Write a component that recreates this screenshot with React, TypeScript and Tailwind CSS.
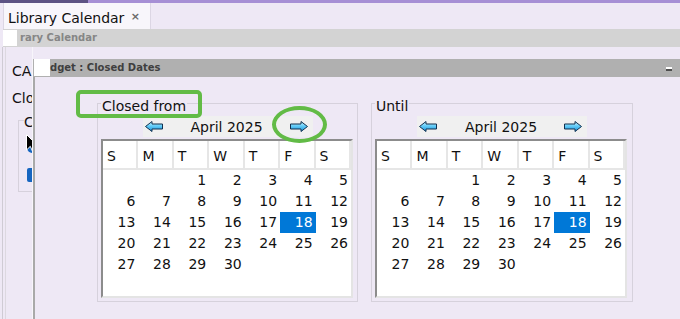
import React from 'react'

const heads = ['S', 'M', 'T', 'W', 'T', 'F', 'S']

function Arrow({ dir, id, className }: { dir: 'left' | 'right'; id: string; className?: string }) {
  const d =
    dir === 'left'
      ? 'M0.5 5.5 L7 0.5 V3 H17.5 V8 H7 V10.5 Z'
      : 'M17.5 5.5 L11 0.5 V3 H0.5 V8 H11 V10.5 Z'
  return (
    <svg width="18" height="11" viewBox="0 0 18 11" className={className}>
      <defs>
        <linearGradient id={id} x1="0" y1="0" x2="0" y2="1">
          <stop offset="0" stopColor="#d2f3ff" />
          <stop offset="0.45" stopColor="#62cdf8" />
          <stop offset="1" stopColor="#1e8ed8" />
        </linearGradient>
      </defs>
      <path d={d} fill={`url(#${id})`} stroke="#11304f" strokeWidth="1" />
    </svg>
  )
}

function Calendar({ label, id, className }: { label: string; id: string; className: string }) {
  const cells: (number | null)[] = [null, null, ...Array.from({ length: 30 }, (_, i) => i + 1)]
  while (cells.length < 42) cells.push(null)

  return (
    <fieldset className={`border border-[#d6d1dc] px-[3px] pb-[3px] ${className}`}>
      <legend className="px-px pt-[5px] leading-[16px]">{label}</legend>
      <div className="mx-auto mt-[2px] flex h-[21px] w-[170px] items-center bg-[#f0f0f0] pl-[2px]">
        <Arrow dir="left" id={`${id}-l`} />
        <span className="ml-[28px] leading-[16px]">April 2025</span>
        <Arrow dir="right" id={`${id}-r`} className="ml-[27px]" />
      </div>
      <div className="mt-[2px] w-[252px] border-2 border-t-[#8c8c8c] border-l-[#8c8c8c] border-r-[#e4e4e4] border-b-[#e4e4e4] bg-white">
        <div className="grid grid-cols-7">
          {heads.map((h, i) => (
            <div key={i} className="h-[29px] border-r-2 border-b-2 border-[#e6e6e6] pl-[4px] pt-[7px] leading-[16px]">
              {h}
            </div>
          ))}
        </div>
        <div className="grid grid-cols-7">
          {cells.map((d, i) => (
            <div
              key={i}
              className={
                d === 18
                  ? 'h-[21px] bg-[#0078d7] pr-[3px] text-right leading-[21px] text-white'
                  : 'h-[21px] pr-[3px] text-right leading-[21px]'
              }
            >
              {d ?? ''}
            </div>
          ))}
        </div>
      </div>
    </fieldset>
  )
}

export default function App() {
  return (
    <div className="relative flex h-[319px] w-[680px] flex-col overflow-hidden bg-[#eee8f5] font-['DejaVu_Sans',sans-serif] text-[14px] text-[#111]">
      {/* top strip */}
      <div className="flex h-[3px] shrink-0">
        <div className="w-[88px] bg-[#5d5384]" />
        <div className="flex-1 bg-[#a68fd5]" />
      </div>

      {/* tab */}
      <div className="flex h-[26px] shrink-0">
        <div className="ml-[3px] flex w-[148px] items-start border-x border-[#dcd6e4] bg-[#f8f6fb] pl-[4px] pt-[7px]">
          <span className="leading-[16px]">Library Calendar</span>
          <span className="ml-auto mr-[10px] mt-[-1px] text-[11px] font-bold leading-[16px] text-[#6a6a6a]">×</span>
        </div>
      </div>

      {/* panel header */}
      <div className="ml-[3px] flex h-[18px] shrink-0 items-center bg-[#d3d3d3]">
        <div className="h-[16px] w-[14px] bg-white" />
        <span className="ml-[3px] text-[10px] font-bold leading-[12px] text-[#868686]">rary Calendar</span>
      </div>

      <div className="flex flex-1">
        <div className="ml-[2px] w-px bg-[#cfcbd4]" />
        <div className="ml-[2px] w-px bg-[#dcd8e0]" />

        {/* underlying panel, mostly covered */}
        <div className="relative w-[27px] overflow-hidden border-r border-[#f7f5fa]">
          <div className="whitespace-nowrap pl-[6px] pt-[16px] leading-[16px]">CA</div>
          <div className="mt-[11px] whitespace-nowrap pl-[6px] leading-[16px]">Clo</div>
          <fieldset className="ml-[12px] mt-[4px] w-[40px] border border-[#d6d1dc] pb-[9px]">
            <legend className="ml-[5px] pt-[4px] leading-[16px]">C</legend>
            <div className="ml-[8px] mt-[12px] h-[11px] w-[11px] rounded-full bg-[#1565c0]" />
            <div className="ml-[8px] mt-[15px] h-[14px] w-[13px] rounded-[2px] bg-[#1565c0]" />
          </fieldset>
          <svg width="12" height="19" viewBox="0 0 12 19" className="absolute left-[20px] top-[87px]">
            <path d="M0.5 0.5 V16 L4.3 12.3 L6.8 18 L9.2 17 L6.8 11.5 H11.5 Z" fill="#000" stroke="#fff" strokeWidth="1" />
          </svg>
        </div>

        {/* window */}
        <div className="mt-[12px] flex flex-1 flex-col">
          <div className="flex h-[18px] items-center bg-[#b0b0b0]">
            <div className="ml-px h-[17px] w-[16px] self-start bg-white" />
            <span className="text-[10px] font-bold leading-[12px] text-[#3f3f3f]">dget : Closed Dates</span>
            <div className="ml-auto mr-[8px] mt-px h-[4px] w-[6px] border-b-2 border-[#4d4d4d] bg-white" />
          </div>
          <div className="flex flex-1 items-start gap-[13px] border-l-2 border-[#a9a9a9] pl-[62px] pt-[16px]">
            <Calendar label="Closed from" id="from" className="w-[261px]" />
            <Calendar label="Until" id="until" className="w-[262px]" />
          </div>
        </div>
      </div>

      {/* annotation highlights */}
      <div className="absolute left-[76px] top-[90px] h-[28px] w-[126px] rounded-[5px] border-4 border-[#62bb46]" />
      <div className="absolute left-[272px] top-[106px] h-[37px] w-[55px] rounded-[50%] border-4 border-[#62bb46]" />
    </div>
  )
}
